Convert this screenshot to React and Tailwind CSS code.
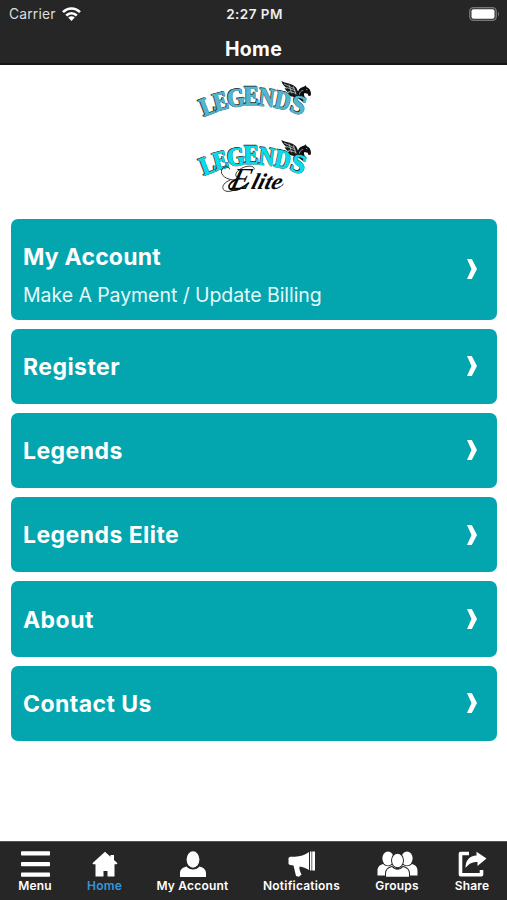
const letters = [
  ["L", 68, 108, -21, 0.84],
  ["E", 107, 94, -15, 0.82],
  ["G", 153, 84, -8, 0.86],
  ["E", 200, 79, 0, 0.84],
  ["N", 246, 83, 6, 0.82],
  ["D", 294, 92, 12, 0.82],
  ["S", 341, 105, 18, 1.0],
];

function Wordmark({ y, color }) {
  return (
    <g transform={`translate(0 ${y})`}>
      <path fill="#15191a" d="M289 33c12 8 34 6 45 20l7 16-4 13c-15 0-26-5-32-13l9 0c-9-4-13-8-15-15l8 2c-9-6-15-13-18-23z" />
      <path fill="none" stroke="#d5dfe0" strokeWidth="2" d="M297 42l31 14M304 52l28 11M310 64l24 6M312 44l8 26M325 49l8 25" />
      <path fill="#0b0d0e" d="M338 84c-2-17 3-29 14-32l7-3 4-3 1 5c9 3 14 11 14 21l-2 6-6-1-2-6-10-2c-3 5 1 10 3 16l-8 10z" />
      <path fill="none" stroke="#cbd5d6" strokeWidth="2" d="M343 74c1-7 5-12 12-13M363 58l4 2" />
      <g fontFamily="'Liberation Serif', serif" fontWeight="700" fontSize="79" textAnchor="middle">
        {letters.map(([c, x, cy, r, s], i) => (
          <g key={i} transform={`translate(${x} ${cy}) rotate(${r}) scale(${s} 1)`}>
            <text x="-3" y="24" fill="#17282b" stroke="#17282b" strokeWidth="2">{c}</text>
            <text x="0" y="26" fill={color} stroke="#315d66" strokeWidth="3" paintOrder="stroke">{c}</text>
            <text x="0" y="26" fill={color} stroke={color} strokeWidth="1">{c}</text>
          </g>
        ))}
      </g>
    </g>
  );
}

function Logo() {
  return (
    <svg viewBox="0 0 420 390" className="h-[130px] w-[140px]">
      <Wordmark y={0} color="#54b5cb" />
      <Wordmark y={177} color="#08dce8" />
      <g fill="#080808" fontFamily="'Liberation Serif', serif" fontStyle="italic">
        <g transform="translate(132 356) skewX(-14)">
          <text fontSize="92" textLength="60" lengthAdjust="spacingAndGlyphs" stroke="#fff" strokeWidth="3" paintOrder="stroke">E</text>
        </g>
        <g transform="translate(196 356) skewX(-16)">
          <text fontSize="68" fontWeight="700" textLength="90" lengthAdjust="spacingAndGlyphs" stroke="#fff" strokeWidth="3" paintOrder="stroke">lite</text>
        </g>
      </g>
      <path fill="none" stroke="#111" strokeWidth="2.5" d="M208 298c0-13-25-13-45 1-18 13-12 27 7 26M152 330c-29 0-47-15-42-30 4-12 23-13 24-2" />
      <path fill="none" stroke="#0b0b0b" strokeWidth="5" d="M164 325c-25 6-40 24-28 33 14 8 41-5 56-20" />
      <path fill="none" stroke="#111" strokeWidth="2.500" d="M136 330c-27 10-29 31-10 34 9 1 19-2 25-6M281 351c7 0 11-4 14-10" />
    </svg>
  );
}

function Chevron() {
  return (
    <svg viewBox="0 0 10 20" className="h-5 w-2.5" fill="#fff">
      <path d="M0 0h4.800l5.200 10-5.200 10H0l4.500-10z" />
    </svg>
  );
}

const rows = ["Register", "Legends", "Legends Elite", "About", "Contact Us"];

const icons = {
  menu: (
    <svg viewBox="0 0 29 26" className="h-[26px] w-[29px]" fill="currentColor">
      <rect y=".3" width="29" height="4.200" rx=".8" />
      <rect y="11" width="29" height="4.200" rx=".8" />
      <rect y="21.500" width="29" height="4.200" rx=".8" />
    </svg>
  ),
  home: (
    <svg viewBox="0 0 26 26" className="h-[26px] w-[26px]" fill="currentColor">
      <path d="M13 .8l5.500 5V4H22v5l3.500 3.200-1 1H22.500v12.300h-7V20h-4v5.500h-8V13.200H1.200l-.8-1z" />
    </svg>
  ),
  user: (
    <svg viewBox="0 0 26 26" className="h-[26px] w-[26px]" fill="currentColor">
      <ellipse cx="13" cy="8.500" rx="6.400" ry="8.200" />
      <path d="M6.500 15.500c3 4 10 4 13 0 4 1 6.500 3 6.500 7V26H0v-3.500c0-4 2.500-6 6.500-7z" />
    </svg>
  ),
  horn: (
    <svg viewBox="0 0 28 26" className="h-[26px] w-7" fill="currentColor">
      <path d="M2 5.800h5C12 5.500 17 4 21 1v18c-3-2-6-3-9.500-3.500-.5 2 .5 5 2 8l-2.500 2.300-3-.8-2.500-10.500L2 14l-1.500-1V7zM22 .5h1.500v19H22zM24.200.5H27v19h-2.800z" />
    </svg>
  ),
  group: (
    <svg viewBox="0 0 41 26" className="h-[26px] w-[41px]" fill="currentColor">
      <ellipse cx="11" cy="7.500" rx="5.600" ry="7" />
      <ellipse cx="30" cy="7.500" rx="5.600" ry="7" />
      <path d="M6 13c3 3 7 3 10 0l3 2v9.500H.5V20c0-4 2-6 5.500-7zM35 13c-3 3-7 3-10 0l-3 2v9.500h18.500V20c0-4-2-6-5.500-7z" />
      <g stroke="#262626" strokeWidth="2" paintOrder="stroke">
        <path d="M15 16c3 3.500 8 3.500 11 0 4 1 6 3 6 6.500v3.300H9v-3.300c0-3.500 2-5.500 6-6.500z" />
        <ellipse cx="20.500" cy="9.500" rx="5.500" ry="6.800" />
      </g>
    </svg>
  ),
  share: (
    <svg viewBox="0 0 29 26" className="h-[26px] w-[29px]">
      <path d="M11 2.500H2.500v21.300h21V19" fill="none" stroke="currentColor" strokeWidth="3.600" strokeLinejoin="round" />
      <path d="M18.500.8l10 6.700-9 7.500v-4c-5 0-8.500 1.500-12 6 0-8 4-12 11-12.500z" fill="currentColor" />
    </svg>
  ),
};

const tabs = [
  ["Menu", "menu", "w-[70px]"],
  ["Home", "home", "w-[69px]"],
  ["My Account", "user", "w-[107px]"],
  ["Notifications", "horn", "w-[111px]"],
  ["Groups", "group", "w-20"],
  ["Share", "share", "w-[70px]"],
];

export default function App() {
  return (
    <div className="flex h-[900px] w-[507px] flex-col overflow-hidden bg-white font-['Inter',sans-serif] text-white">
      <header className="h-[65px] border-b-2 border-[#151515] bg-[#262626]">
        <div className="grid h-7 grid-cols-3 items-center pl-[9px] pr-[7px] text-[13.5px]">
          <div className="flex items-center gap-1.5 text-[#dedede]">
            <span className="text-[13.8px] tracking-[0.2px]">Carrier</span>
            <svg viewBox="0 0 19 14" className="h-3.5 w-[19px]" fill="none" stroke="#fff" strokeWidth="2.600">
              <path d="M1 5.200c5-5 12-5 17 0M4.200 8.500c3.200-3 7.400-3 10.600 0" />
              <path d="M6.200 10.600c2-1.800 4.600-1.800 6.600 0L9.500 14z" fill="#fff" stroke="none" />
            </svg>
          </div>
          <span className="text-center font-semibold tracking-[0.45px] text-[#eee]">2:27 PM</span>
          <svg viewBox="0 0 31 14" className="h-3.5 w-[31px] justify-self-end">
            <rect x=".7" y=".7" width="26.600" height="12.600" rx="3.800" fill="#333" stroke="#777" strokeWidth="1.300" />
            <rect x="2.500" y="2.300" width="23" height="9.400" rx="2" fill="#fff" />
            <path d="M29 4.500q2 2.500 0 5z" fill="#777" />
          </svg>
        </div>
        <h1 className="mt-[7px] text-center text-[19.5px] font-bold leading-7 tracking-[0.3px]">Home</h1>
      </header>
      <main className="flex flex-1 flex-col pl-[11px] pr-2.5 pt-[5px]">
        <div className="mb-[18.5px] flex justify-center pl-0.5"><Logo /></div>
        <div className="flex flex-col gap-[9px]">
          <div className="flex h-[101px] items-center justify-between rounded-[7px] bg-[#03a5af] pl-3 pr-5">
            <div className="pt-[14px]">
              <div className="text-[23px] font-bold leading-[30px] tracking-[0.2px]">My Account</div>
              <div className="mt-2 text-[19.5px] leading-[30px] tracking-[-0.06px] text-[#e5fafa]">Make A Payment / Update Billing</div>
            </div>
            <Chevron />
          </div>
          {rows.map((name) => (
            <div key={name} className="flex h-[75.3px] items-center justify-between rounded-[7px] bg-[#03a5af] pl-3 pr-5">
              <span className="pt-[1.5px] text-[23px] font-bold leading-[30px] tracking-[0.45px]">{name}</span>
              <Chevron />
            </div>
          ))}
        </div>
      </main>
      <nav className="flex h-[59px] border-t border-[#555] bg-[#262626] pt-[9px]">
        {tabs.map(([name, icon, width]) => (
          <div key={name} className={`flex shrink-0 flex-col items-center ${width}`}>
            {icons[icon]}
            <span className={`mt-px whitespace-nowrap text-xs font-semibold leading-[15px] tracking-[0.2px] ${name === "Home" ? "text-[#3498db]" : ""}`}>{name}</span>
          </div>
        ))}
      </nav>
    </div>
  );
}
